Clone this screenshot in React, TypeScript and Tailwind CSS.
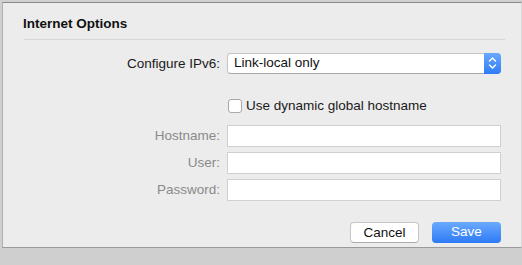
import { useState } from 'react';

const font = { fontFamily: '"Liberation Sans", "Noto Sans", sans-serif' };

function Stepper() {
  return (
    <div className="flex h-full w-[17px] items-center justify-center rounded-r-[4px] bg-gradient-to-b from-[#6aa8fd] to-[#2d7bf6]">
      <svg width="9" height="14" viewBox="0 0 9 14" fill="none" stroke="white" strokeWidth="1.4" strokeLinecap="round" strokeLinejoin="round">
        <path d="M1.5 5 L4.5 2 L7.5 5" />
        <path d="M1.5 9 L4.5 12 L7.5 9" />
      </svg>
    </div>
  );
}

function Row({ label, muted, children }: { label: string; muted?: boolean; children: React.ReactNode }) {
  return (
    <div className="flex items-center">
      <div className={`w-[218px] pr-[1px] text-right text-[13.5px] leading-[19px] ${muted ? 'text-[#8a8a8a]' : 'text-[#1a1a1a]'}`}>
        {label}
      </div>
      <div className="ml-[6px] w-[274px]">{children}</div>
    </div>
  );
}

function TextField() {
  return <div className="h-[22px] w-full border border-[#d0d0d0] bg-white" />;
}

export default function App() {
  const [dynamic, setDynamic] = useState(false);

  return (
    <div className="h-[265px] w-[522px] overflow-hidden bg-[#cfcfcf] pl-[2px] pt-[2px]" style={font}>
      <div className="h-[246px] w-[520px] border-l border-t border-b border-r border-l-[#b0b0b0] border-t-[#8a8a8a] border-b-[#9a9a9a] border-r-[#d8d8d8] bg-[#ececec]">
        <div className="px-[20px] pt-[11px] text-[13.5px] leading-[19.5px] font-bold text-[#111]">Internet Options</div>
        <div className="ml-[21px] mr-[16px] mt-[5px] h-px bg-[#d6d6d6]" />

        <div className="mt-[13px] flex flex-col">
          <Row label="Configure IPv6:">
            <div className="flex h-[21px] w-full items-stretch rounded-[4px] border border-[#c4c4c4] border-b-[#a9a9a9] bg-white">
              <div className="flex flex-1 items-center pl-[6px] text-[13.5px] text-[#111]">Link-local only</div>
              <div className="-my-px -mr-px">
                <Stepper />
              </div>
            </div>
          </Row>

          <div className="mt-[23px] flex h-[19px] items-center pl-[225px]">
            <button
              type="button"
              onClick={() => setDynamic(!dynamic)}
              className="flex h-[14px] w-[14px] items-center justify-center rounded-[3px] border border-[#a8a8a8] bg-white"
            />
            <span className="ml-[4px] text-[13.5px] text-[#1a1a1a]">Use dynamic global hostname</span>
          </div>

          <div className="mt-[9px] flex flex-col gap-[5px]">
            <Row label="Hostname:" muted>
              <TextField />
            </Row>
            <Row label="User:" muted>
              <TextField />
            </Row>
            <Row label="Password:" muted>
              <TextField />
            </Row>
          </div>

          <div className="mt-[21px] flex justify-end gap-[13px] pr-[20px]">
            <button
              type="button"
              className="h-[21px] w-[69px] rounded-[4px] border border-[#c6c6c6] border-b-[#acacac] bg-white text-[13.5px] text-[#111]"
            >
              Cancel
            </button>
            <button
              type="button"
              className="h-[21px] w-[69px] rounded-[4px] bg-gradient-to-b from-[#6aa9fd] to-[#2c7af5] text-[13.5px] text-white"
            >
              Save
            </button>
          </div>
        </div>
      </div>
    </div>
  );
}
